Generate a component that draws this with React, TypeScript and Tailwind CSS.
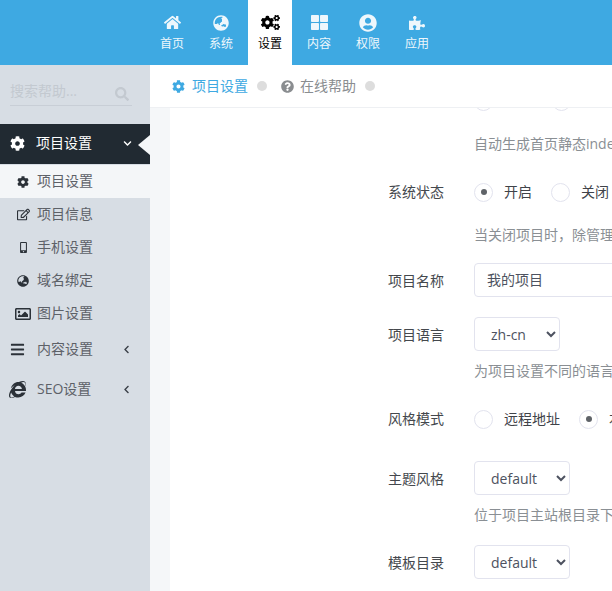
import type { ReactNode } from 'react'
import {
  FaChevronDown,
  FaChevronLeft,
  FaCog,
  FaCogs,
  FaGlobeAsia,
  FaHome,
  FaInternetExplorer,
  FaMobileAlt,
  FaPuzzlePiece,
  FaQuestionCircle,
  FaRegEdit,
  FaRegImage,
  FaBars,
  FaSearch,
  FaThLarge,
  FaUserCircle,
} from 'react-icons/fa'

const nav = [
  { label: '首页', icon: <FaHome size={17} /> },
  { label: '系统', icon: <FaGlobeAsia size={16} /> },
  { label: '设置', icon: <FaCogs size={19} />, active: true },
  { label: '内容', icon: <FaThLarge size={17} /> },
  { label: '权限', icon: <FaUserCircle size={18} /> },
  { label: '应用', icon: <FaPuzzlePiece size={16} /> },
]

const subMenu = [
  { label: '项目设置', icon: <FaCog size={12} />, active: true },
  { label: '项目信息', icon: <FaRegEdit size={13} /> },
  { label: '手机设置', icon: <FaMobileAlt size={11} /> },
  { label: '域名绑定', icon: <FaGlobeAsia size={12} /> },
  { label: '图片设置', icon: <FaRegImage size={16} /> },
]

function Radio({ checked, label }: { checked?: boolean; label: string }) {
  return (
    <div className="flex items-center gap-[11px] shrink-0 whitespace-nowrap">
      <span className="flex items-center justify-center w-[19px] h-[19px] rounded-full border border-[#e2e3ee] bg-white">
        {checked && <span className="w-[6px] h-[6px] rounded-full bg-[#5f6368]" />}
      </span>
      <span className="pb-[2px] text-[#3f4349]">{label}</span>
    </div>
  )
}

function Row({ label, className, raised, children }: { label?: string; className: string; raised?: boolean; children: ReactNode }) {
  return (
    <div className={`flex items-center ${className}`}>
      <div className={`w-[86px] shrink-0 text-[#44484d] ${raised ? 'pb-[2px]' : ''}`}>{label}</div>
      <div className="flex items-center shrink-0 whitespace-nowrap">{children}</div>
    </div>
  )
}

function Help({ text }: { text: string }) {
  return <div className="pl-[86px] h-[20px] leading-[20px] text-[#8a8f94] whitespace-nowrap">{text}</div>
}

function Select({ value, width }: { value: string; width: string }) {
  return (
    <select
      defaultValue={value}
      className={`${width} h-[34px] pl-3 rounded-[4px] border border-[#e2e3ee] bg-white text-[14px] text-[#4d5260]`}
    >
      <option value={value}>{value}</option>
    </select>
  )
}

export default function App() {
  return (
    <div className="w-[612px] h-[591px] overflow-hidden flex flex-col bg-white text-[14px] font-['Open_Sans','Noto_Sans_CJK_SC',sans-serif]">
      <header className="h-[65px] shrink-0 bg-[#3ea9e2] flex pl-[150px] gap-[5px] text-white">
        {nav.map((item) => (
          <div
            key={item.label}
            className={`w-[44px] flex flex-col items-center text-[12px] ${item.active ? 'bg-white text-black' : 'text-[#eef7fc]'}`}
          >
            <div className="h-[21px] mt-[12px] flex items-center justify-center">{item.icon}</div>
            <div className="mt-[2px] leading-[18px]">{item.label}</div>
          </div>
        ))}
      </header>

      <div className="flex flex-1 min-h-0">
        <aside className="w-[150px] shrink-0 bg-[#d7dde4] text-[#5d6168]">
          <div className="h-[59px] pt-[14px] px-[10px]">
            <div className="w-[122px] h-[27px] flex items-center justify-between border-b border-[#c8ced6] pr-[3px] text-[#c3c9d0]">
              <span className="pb-[4px]">搜索帮助...</span>
              <FaSearch size={14} className="mt-[4px]" />
            </div>
          </div>
          <div className="relative h-[40px] flex items-center pb-[2px] pl-[10px] pr-[18px] bg-[#212a32] text-white">
            <FaCog size={15} />
            <span className="ml-[11px] flex-1 pb-[2px]">项目设置</span>
            <FaChevronDown size={9} />
            <span className="absolute right-0 top-[11px] border-y-[10px] border-r-[12px] border-y-transparent border-r-[#f5f7f9]" />
          </div>
          <div className="mt-[1px]">
            {subMenu.map((item) => (
              <div
                key={item.label}
                className={`h-[33px] flex items-center ${item.active ? 'bg-[#f4f6f8]' : ''}`}
              >
                <span className="w-[37px] pl-[15px] pr-[6px] flex justify-center text-[#2b3138]">{item.icon}</span>
                <span className="pb-[2px]">{item.label}</span>
              </div>
            ))}
          </div>
          <div className="h-[40px] -mt-[1px] flex items-center pl-[10px] pr-[19px]">
            <FaBars size={15} className="text-[#2b3138]" />
            <span className="ml-[12px] flex-1 pb-[2px]">内容设置</span>
            <FaChevronLeft size={9} className="text-[#3b4048]" />
          </div>
          <div className="h-[40px] flex items-center pl-[9px] pr-[19px]">
            <FaInternetExplorer size={17} className="text-[#2b3138]" />
            <span className="ml-[11px] flex-1 pb-[2px]">SEO设置</span>
            <FaChevronLeft size={9} className="text-[#3b4048]" />
          </div>
        </aside>

        <main className="flex-1 min-w-0 flex flex-col">
          <div className="h-[43px] shrink-0 flex items-center pl-[22px] border-b border-[#eef0f3] text-[#8a8d90]">
            <FaCog size={13} className="text-[#3ea9e2]" />
            <span className="ml-[7px] pb-[2px] text-[#3ea9e2]">项目设置</span>
            <span className="ml-[9px] w-[10px] h-[10px] rounded-full bg-[#dddddd]" />
            <FaQuestionCircle size={13} className="ml-[14px]" />
            <span className="ml-[6px] pb-[2px]">在线帮助</span>
            <span className="ml-[9px] w-[10px] h-[10px] rounded-full bg-[#dddddd]" />
          </div>
          <div className="flex-1 min-h-0 overflow-hidden flex">
            <div className="w-[20px] shrink-0 bg-[#f5f7f9]" />
            <div className="flex-1 min-w-0 pl-[218px] overflow-hidden">
              <Row className="h-[19px] -mt-[16px]" label="">
                <div className="flex gap-[59px]">
                  <span className="w-[19px] h-[19px] rounded-full border border-[#e2e3ee]" />
                  <span className="w-[19px] h-[19px] rounded-full border border-[#e2e3ee]" />
                </div>
              </Row>
              <div className="mt-[23px]">
                <Help text="自动生成首页静态index.html文件" />
              </div>
              <Row className="h-[20px] mt-[28px]" raised label="系统状态">
                <div className="flex gap-[19px]">
                  <Radio checked label="开启" />
                  <Radio label="关闭" />
                </div>
              </Row>
              <div className="mt-[23px]">
                <Help text="当关闭项目时，除管理员外无法访问" />
              </div>
              <Row className="h-[34px] mt-[18px]" label="项目名称">
                <div className="w-[300px] h-[34px] pl-3 pb-[2px] flex items-center rounded-[4px] border border-[#e2e3ee] text-[#4d5260]">
                  我的项目
                </div>
              </Row>
              <Row className="h-[34px] mt-[20px]" label="项目语言">
                <Select value="zh-cn" width="w-[86px]" />
              </Row>
              <div className="mt-[10px]">
                <Help text="为项目设置不同的语言包" />
              </div>
              <Row className="h-[20px] mt-[28px]" raised label="风格模式">
                <div className="flex gap-[19px]">
                  <Radio label="远程地址" />
                  <Radio checked label="本地目录" />
                </div>
              </Row>
              <Row className="h-[34px] mt-[32px]" label="主题风格">
                <Select value="default" width="w-[96px]" />
              </Row>
              <div className="mt-[10px]">
                <Help text="位于项目主站根目录下的文件夹" />
              </div>
              <Row className="h-[34px] mt-[20px]" label="模板目录">
                <Select value="default" width="w-[96px]" />
              </Row>
            </div>
          </div>
        </main>
      </div>
    </div>
  )
}
